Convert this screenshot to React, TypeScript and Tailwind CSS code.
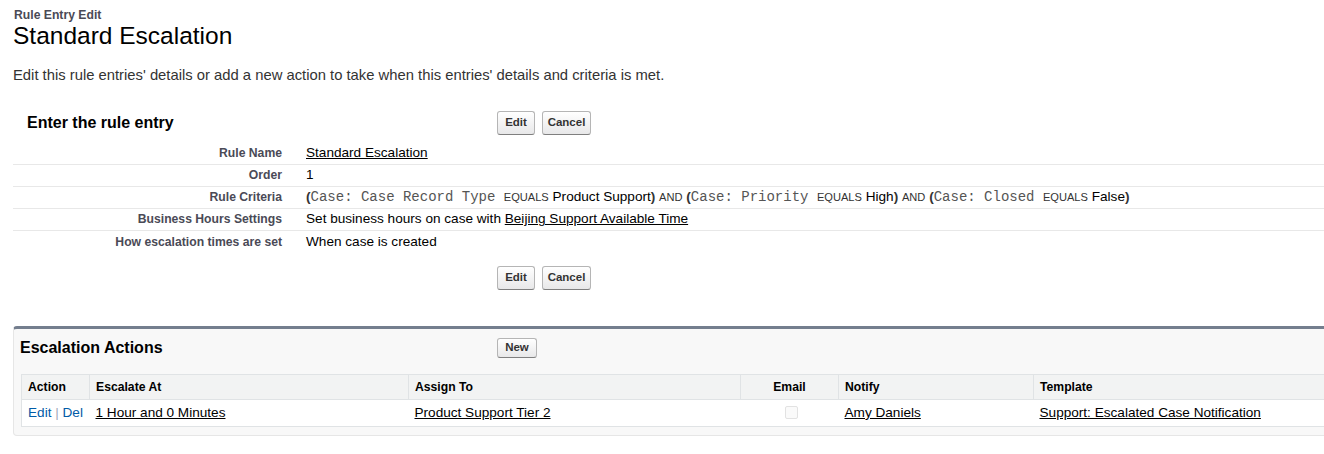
export default function App() {
  const rows: { label: string; value: React.ReactNode; last?: boolean }[] = [
    { label: 'Rule Name', value: <span className="underline">Standard Escalation</span> },
    { label: 'Order', value: '1' },
    {
      label: 'Rule Criteria',
      value: (
        <span>
          <Paren>(</Paren>
          <Field>Case: Case Record Type </Field>
          <Op>EQUALS</Op> Product Support<Paren>)</Paren> <Op>AND</Op> <Paren>(</Paren>
          <Field>Case: Priority </Field>
          <Op>EQUALS</Op> High<Paren>)</Paren> <Op>AND</Op> <Paren>(</Paren>
          <Field>Case: Closed </Field>
          <Op>EQUALS</Op> False<Paren>)</Paren>
        </span>
      ),
    },
    {
      label: 'Business Hours Settings',
      value: (
        <span>
          Set business hours on case with <span className="underline">Beijing Support Available Time</span>
        </span>
      ),
    },
    { label: 'How escalation times are set', value: 'When case is created', last: true },
  ];

  return (
    <div className="w-full min-h-screen overflow-hidden bg-white font-['Arial','Liberation_Sans',sans-serif] text-black">
      {/* Page header */}
      <div className="pl-[14px] pt-[8px] text-[12.2px] font-bold leading-[14px] text-[#4a4a56]">Rule Entry Edit</div>
      <h1 className="pl-[13px] text-[24.5px] leading-[28px] text-black">Standard Escalation</h1>
      <p className="mt-[16px] pl-[13px] text-[14.8px] leading-[18px] text-[#333]">
        Edit this rule entries' details or add a new action to take when this entries' details and criteria is met.
      </p>

      {/* Detail section */}
      <div className="mt-[27px] pl-[13px]">
        <div className="flex h-[24px] items-center">
          <h2 className="w-[484px] pl-[14px] text-[16px] font-bold text-black">Enter the rule entry</h2>
          <ButtonPair />
        </div>

        <div className="mt-[8px]">
          {rows.map((r) => (
            <div
              key={r.label}
              className={`flex h-[22px] items-center ${r.last ? '' : 'border-b border-[#e8e8e8]'}`}
            >
              <div className="w-[269px] text-right text-[12.2px] font-bold text-[#4a4a56]">{r.label}</div>
              <div className="pl-[24px] text-[13.6px] whitespace-nowrap text-black">{r.value}</div>
            </div>
          ))}
        </div>

        <div className="mt-[13px] flex h-[24px] items-center">
          <div className="w-[484px]" />
          <ButtonPair />
        </div>
      </div>

      {/* Escalation actions */}
      <div className="mt-[36px] ml-[13px] mr-[-20px] rounded-[4px] border border-t-[3px] border-[#e6e6e6] border-t-[#747e8e] bg-[#f8f8f8] pb-[8px]">
        <div className="flex h-[38px] items-center">
          <h3 className="w-[483px] pl-[6px] text-[16px] font-bold text-black">Escalation Actions</h3>
          <Btn w="w-[40px]" h="h-[20px]">New</Btn>
        </div>
        <table className="mt-[7px] ml-[7px] w-[1320px] border-collapse border border-[#e0e3e5] bg-white text-left">
          <thead>
            <tr className="h-[25px] bg-[#f2f3f3] text-[12.2px] font-bold text-black">
              <th className="w-[68px] pl-[6px] font-bold">Action</th>
              <th className="w-[319px] border-l border-[#e0e3e5] pl-[6px] font-bold">Escalate At</th>
              <th className="w-[332px] border-l border-[#e0e3e5] pl-[6px] font-bold">Assign To</th>
              <th className="w-[98px] border-l border-[#e0e3e5] text-center font-bold">Email</th>
              <th className="w-[195px] border-l border-[#e0e3e5] pl-[6px] font-bold">Notify</th>
              <th className="border-l border-[#e0e3e5] pl-[6px] font-bold">Template</th>
            </tr>
          </thead>
          <tbody>
            <tr className="h-[27px] border-t border-b border-[#e0e3e5] text-[13.6px] text-black">
              <td className="pl-[6px] whitespace-nowrap text-[#015ba7]">
                Edit <span className="text-[#a0a8b8]">|</span> Del
              </td>
              <td className="pl-[6px]">
                <span className="underline">1 Hour and 0 Minutes</span>
              </td>
              <td className="pl-[6px]">
                <span className="underline">Product Support Tier 2</span>
              </td>
              <td className="text-center">
                <span className="inline-block h-[13px] w-[13px] translate-x-[2px] translate-y-[2px] rounded-[2px] border border-[#e2e2e2] bg-[#fafafa]" />
              </td>
              <td className="pl-[6px]">
                <span className="underline">Amy Daniels</span>
              </td>
              <td className="pl-[6px]">
                <span className="underline">Support: Escalated Case Notification</span>
              </td>
            </tr>
          </tbody>
        </table>
      </div>
    </div>
  );
}

function Paren({ children }: { children: React.ReactNode }) {
  return <span className="font-bold text-[#333]">{children}</span>;
}

function Field({ children }: { children: React.ReactNode }) {
  return (
    <span className="whitespace-pre font-['Courier_New','Liberation_Mono',monospace] text-[14px] text-[#555]">
      {children}
    </span>
  );
}

function Op({ children }: { children: React.ReactNode }) {
  return <span className="text-[11.1px] text-[#333]">{children}</span>;
}

function ButtonPair() {
  return (
    <div className="flex gap-[7px]">
      <Btn w="w-[38px]" h="h-[24px]">Edit</Btn>
      <Btn w="w-[49px]" h="h-[24px]">Cancel</Btn>
    </div>
  );
}

function Btn({ children, w, h }: { children: React.ReactNode; w: string; h: string }) {
  return (
    <button
      type="button"
      className={`${w} ${h} flex items-center justify-center rounded-[3px] border border-[#b5b5b5] border-b-[#7f7f7f] bg-gradient-to-b from-white to-[#e8e8e9] text-[11.5px] font-bold text-[#333]`}
    >
      {children}
    </button>
  );
}
